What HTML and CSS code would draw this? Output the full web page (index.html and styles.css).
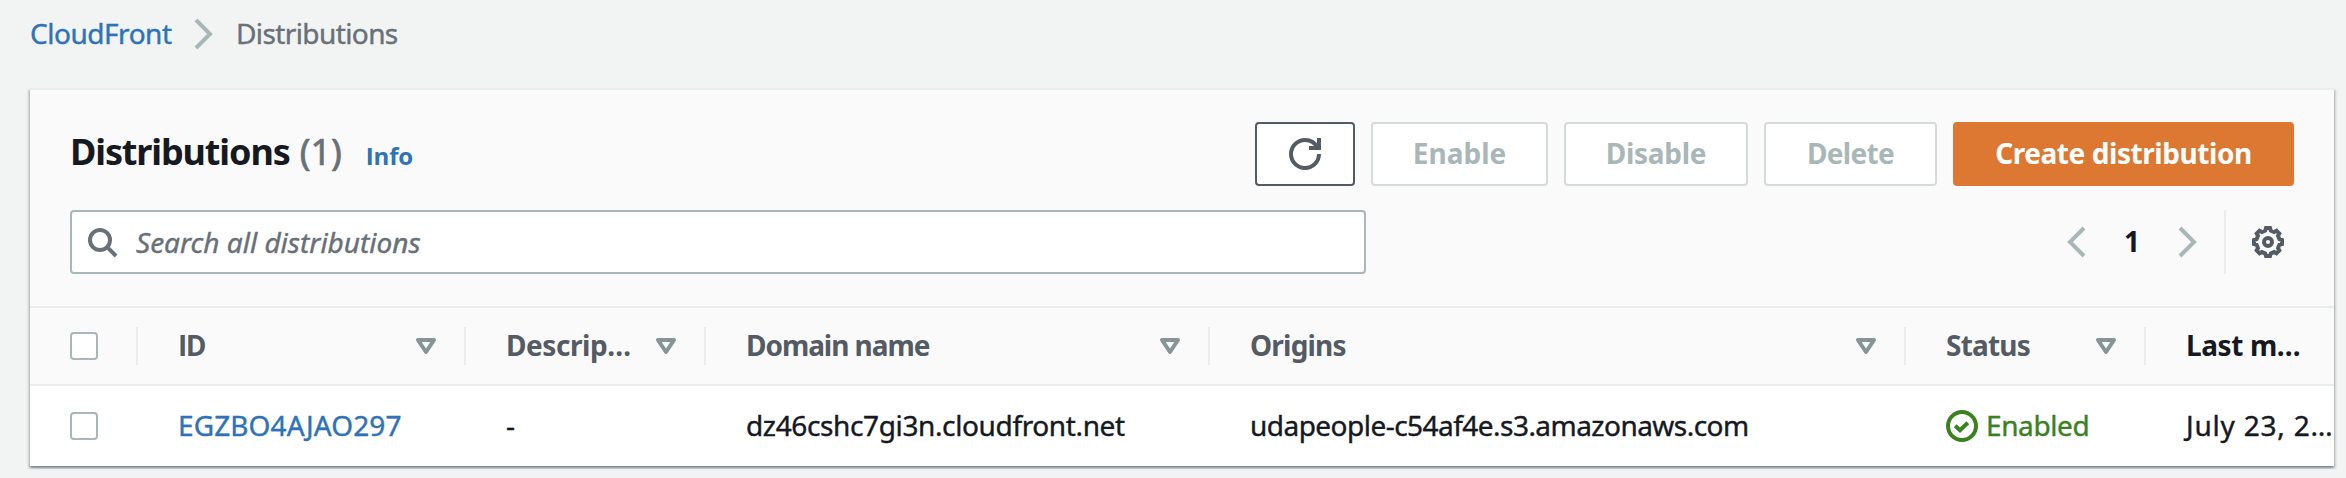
FILE: index.html
```html
<!DOCTYPE html>
<html lang="en">
<head>
<meta charset="utf-8">
<title>CloudFront Distributions</title>
<link rel="stylesheet" href="styles.css">
</head>
<body>
<nav class="crumbs">
  <a class="crumb-link">CloudFront</a>
  <svg class="icon muted" viewBox="0 0 16 16"><path d="M4 1l7 7-7 7"/></svg>
  <span class="crumb-current">Distributions</span>
</nav>
<main class="card">
  <header class="card-header">
    <div class="title-row">
      <h1 class="title">Distributions</h1>
      <span class="count">(1)</span>
      <a class="info">Info</a>
      <div class="actions">
        <button class="btn btn-icon"><svg class="icon" viewBox="0 0 16 16"><path d="M10 5h5V0"/><path d="M15 8c0 3.87-3.13 7-7 7s-7-3.13-7-7 3.13-7 7-7c2.79 0 5.2 1.63 6.3 4"/></svg></button>
        <button class="btn btn-enable" disabled><span>Enable</span></button>
        <button class="btn btn-disable" disabled><span>Disable</span></button>
        <button class="btn btn-delete" disabled><span>Delete</span></button>
        <button class="btn btn-primary"><span>Create distribution</span></button>
      </div>
    </div>
    <div class="tools-row">
      <div class="search">
        <svg class="icon" viewBox="0 0 16 16"><circle cx="7" cy="7" r="5"/><path d="M10.6 10.6L15 15"/></svg>
        <span>Search all distributions</span>
      </div>
      <div class="pager">
        <svg class="icon muted" viewBox="0 0 16 16"><path d="M11 1L4 8l7 7"/></svg>
        <span class="page">1</span>
        <svg class="icon muted" viewBox="0 0 16 16"><path d="M4 1l7 7-7 7"/></svg>
      </div>
      <div class="settings">
        <svg class="icon" viewBox="-8 -8 16 16"><path d="M-1-7L1-7 1.4-5.7 3.04-5.02 4.24-5.66 5.66-4.24 5.02-3.04 5.7-1.4 7-1 7 1 5.7 1.4 5.02 3.04 5.66 4.24 4.24 5.66 3.04 5.02 1.4 5.7 1 7-1 7-1.4 5.7-3.04 5.02-4.24 5.66-5.66 4.24-5.02 3.04-5.7 1.4-7 1-7-1-5.7-1.4-5.02-3.04-5.66-4.24-4.24-5.66-3.04-5.02-1.4-5.7z"/><circle r="2"/></svg>
      </div>
    </div>
  </header>
  <div class="row head">
    <div class="cell check"><span class="box"></span></div>
    <div class="cell"><span class="label t-id">ID</span><svg class="icon sort" viewBox="0 0 16 16"><path d="M4 5h8l-4 6-4-6z"/></svg></div>
    <div class="cell"><span class="label t-desc">Descrip…</span><svg class="icon sort" viewBox="0 0 16 16"><path d="M4 5h8l-4 6-4-6z"/></svg></div>
    <div class="cell"><span class="label t-domain">Domain name</span><svg class="icon sort" viewBox="0 0 16 16"><path d="M4 5h8l-4 6-4-6z"/></svg></div>
    <div class="cell"><span class="label t-origins">Origins</span><svg class="icon sort" viewBox="0 0 16 16"><path d="M4 5h8l-4 6-4-6z"/></svg></div>
    <div class="cell"><span class="label t-status">Status</span><svg class="icon sort" viewBox="0 0 16 16"><path d="M4 5h8l-4 6-4-6z"/></svg></div>
    <div class="cell last"><span class="label t-last">Last m…</span></div>
  </div>
  <div class="row body">
    <div class="cell check"><span class="box"></span></div>
    <div class="cell"><a class="label v-id">EGZBO4AJAO297</a></div>
    <div class="cell"><span class="label">-</span></div>
    <div class="cell"><span class="label v-domain">dz46cshc7gi3n.cloudfront.net</span></div>
    <div class="cell"><span class="label v-origin">udapeople-c54af4e.s3.amazonaws.com</span></div>
    <div class="cell enabled"><svg class="icon" viewBox="0 0 16 16"><circle cx="8" cy="8" r="7"/><path d="M4.6 7.9l2.4 2.2 3.9-3.7"/></svg><span class="label v-status">Enabled</span></div>
    <div class="cell last"><span class="label v-date">July 23, 2…</span></div>
  </div>
</main>
</body>
</html>
```
FILE: styles.css
```css
* { box-sizing: border-box; }
body {
  margin: 0;
  height: 478px;
  overflow: hidden;
  background: #f2f3f3;
  color: #16191f;
  font: 28px/40px "Noto Sans", sans-serif;
  white-space: nowrap;
}
.icon {
  display: block;
  flex: none;
  width: 32px;
  height: 32px;
  fill: none;
  stroke: currentColor;
  stroke-width: 2;
  overflow: visible;
}
.muted { color: #aab7b8; }

.crumbs {
  display: flex;
  align-items: center;
  gap: 16px;
  height: 88px;
  padding: 0 0 20px 30px;
  -webkit-text-stroke: .4px;
}
.crumb-link { color: #2e73b8; letter-spacing: -.47px; width: 142px; padding-bottom: 2px; }
.crumb-current { color: #687078; letter-spacing: -.6px; padding-bottom: 2px; }

.card {
  width: 2304px;
  margin-left: 30px;
  border-top: 2px solid #eaeded;
  background: #fff;
  box-shadow: 0 2px 2px 0 rgba(0, 28, 36, .3), 2px 2px 2px 0 rgba(0, 28, 36, .15), -2px 2px 2px 0 rgba(0, 28, 36, .15);
}
.card-header {
  height: 218px;
  padding: 32px 40px 0;
  background: #fafafa;
  border-bottom: 2px solid #eaeded;
}
.title-row { display: flex; align-items: center; height: 64px; }
.title {
  margin: 0;
  padding-bottom: 5px;
  font-size: 36px;
  font-weight: 700;
  letter-spacing: -1.12px;
}
.count {
  margin-left: 10px;
  padding-bottom: 5px;
  font-size: 36px;
  color: #687078;
  -webkit-text-stroke: .7px;
}
.info {
  margin-left: 24px;
  padding-top: 4px;
  font: 700 24px/40px "Open Sans", sans-serif;
  letter-spacing: -.2px;
  color: #2e73b8;
}
.actions { display: flex; gap: 16px; margin-left: auto; }
.btn {
  display: flex;
  align-items: center;
  justify-content: center;
  height: 64px;
  padding: 0 0 2px;
  border: 2px solid #d5dbdb;
  border-radius: 4px;
  background: #fff;
  color: #aab7b8;
  font: 700 28px/40px "Noto Sans", sans-serif;
}
.btn-icon { width: 100px; padding: 0; border-color: #545b64; color: #545b64; }
.btn-enable { width: 177px; }
.btn-disable { width: 184px; letter-spacing: -.28px; }
.btn-delete { width: 173px; letter-spacing: -.68px; }
.btn-primary { width: 341px; border-color: #dd7832; background: #dd7832; color: #fff; letter-spacing: -.43px; }

.tools-row { display: flex; align-items: center; height: 64px; margin-top: 24px; }
.search {
  display: flex;
  align-items: center;
  gap: 18px;
  width: 1296px;
  height: 64px;
  padding-left: 14px;
  border: 2px solid #aab7b8;
  border-radius: 4px;
  background: #fff;
  color: #687078;
  font-style: italic;
  -webkit-text-stroke: .4px;
}
.pager { display: flex; align-items: center; margin-left: auto; }
.page { width: 78px; padding: 0 2px 2px 0; text-align: center; font-weight: 700; }
.settings {
  display: flex;
  align-items: center;
  height: 64px;
  margin-left: 20px;
  padding: 0 10px 0 26px;
  border-left: 2px solid #eaeded;
  color: #545b64;
}

.row { display: grid; grid-template-columns: 108px 328px 240px 504px 696px 240px 188px; }
.cell { display: flex; align-items: center; padding: 0 22px 0 40px; }
.cell.last { padding-right: 0; overflow: hidden; }
.label { padding-bottom: 2px; }
.head {
  height: 78px;
  padding: 19px 0;
  background: #fafafa;
  border-bottom: 2px solid #eaeded;
  color: #545b64;
  font-weight: 700;
}
.head .cell { height: 38px; border-right: 2px solid #eaeded; }
.head .cell.last { border-right: 0; color: #16191f; }
.body { height: 80px; -webkit-text-stroke: .4px; }
.sort { margin-left: auto; color: #879596; stroke-linejoin: round; }
.box { width: 28px; height: 28px; border: 2px solid #aab7b8; border-radius: 4px; background: #fff; }
.enabled { gap: 8px; color: #3a8220; }

.t-id { font-family: "Open Sans", sans-serif; letter-spacing: -1.5px; }
.t-desc { letter-spacing: -.45px; }
.t-domain { letter-spacing: -1.05px; }
.t-origins, .t-status { letter-spacing: -.8px; }
.t-last { letter-spacing: -.4px; }
.v-id { color: #2e73b8; letter-spacing: .1px; }
.v-domain { letter-spacing: -.37px; }
.v-origin { letter-spacing: -.53px; }
.v-status { letter-spacing: -.38px; }
.v-date { letter-spacing: .8px; }
```
